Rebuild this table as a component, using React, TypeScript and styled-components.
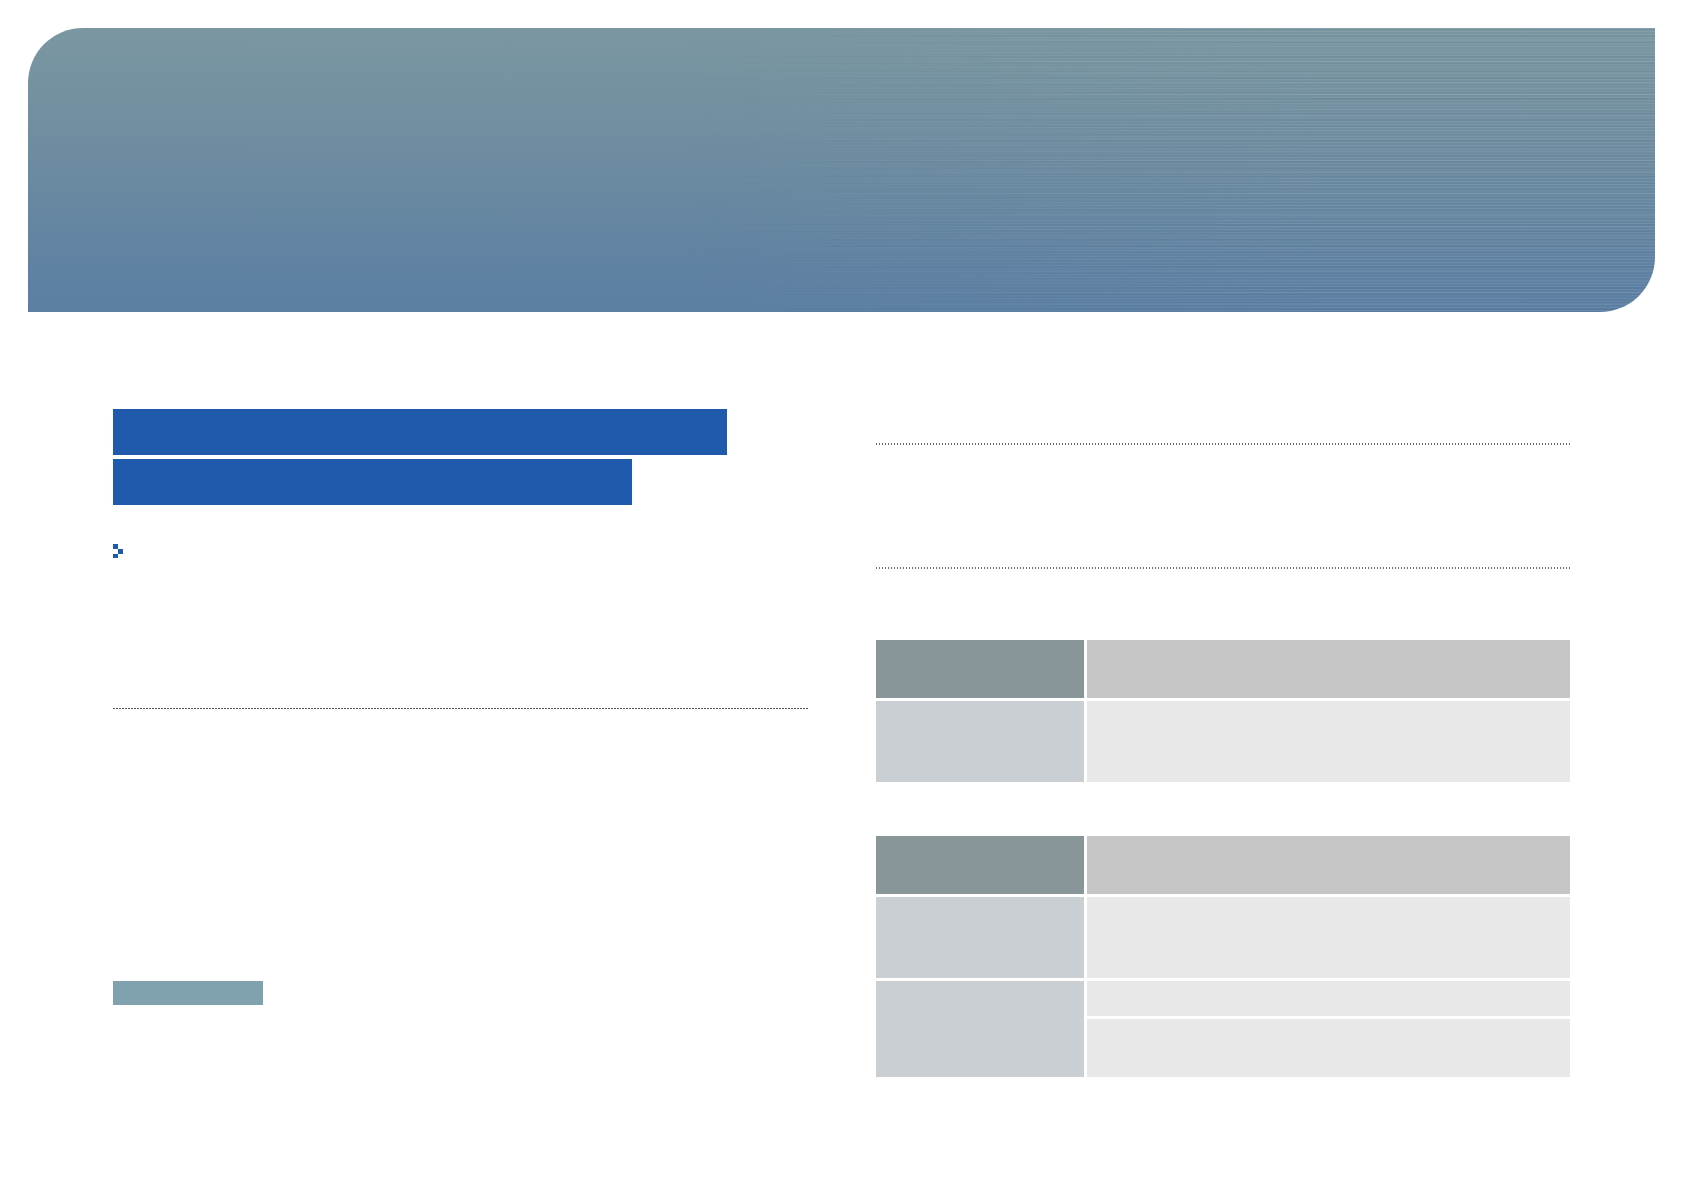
import styled, { createGlobalStyle } from "styled-components";

const GlobalStyle = createGlobalStyle`
  html, body {
    margin: 0;
    padding: 0;
    background: #ffffff;
    font-family: "Liberation Sans", Arial, sans-serif;
  }
`;

export default function App() {
  return (
    <>
      <GlobalStyle />
      <Page>
        <Banner />
        <Content>
          <LeftColumn>
            <TitleBar $width={614} />
            <TitleBar $width={519} $gap={4} />
            <Bullet>
              <svg width="10" height="14" viewBox="0 0 10 14">
                <rect x="0" y="0" width="5" height="5" fill="#1f5aad" />
                <rect x="5" y="5" width="5" height="5" fill="#1f5aad" />
                <rect x="0" y="10" width="5" height="4" fill="#1f5aad" />
              </svg>
            </Bullet>
            <Rule $gap={150} />
            <Tag />
          </LeftColumn>
          <RightColumn>
            <Rule $ticks />
            <Rule $ticks $gap={122} />
            <Table $gap={71}>
              <HeadCell $dark />
              <HeadCell />
              <KeyCell $tall={81} />
              <ValueCell />
            </Table>
            <Table $gap={54}>
              <HeadCell $dark />
              <HeadCell />
              <KeyCell $tall={81} />
              <ValueCell />
              <KeyCell $span={2} />
              <ValueCell $tall={35} />
              <ValueCell $tall={58} />
            </Table>
          </RightColumn>
        </Content>
      </Page>
    </>
  );
}

//style
const Page = styled.div`
  width: 1684px;
  min-height: 1191px;
  padding: 28px 29px 0 28px;
  box-sizing: border-box;
`;

const Banner = styled.div`
  position: relative;
  height: 284px;
  border-radius: 55px 0 55px 0;
  overflow: hidden;
  background: linear-gradient(180deg, #7a97a1 0%, #6d8ca0 45%, #5b7ea3 100%);

  &::after {
    content: "";
    position: absolute;
    inset: 0;
    background:
      repeating-linear-gradient(
        180deg,
        rgba(255, 255, 255, 0.08) 0 1px,
        transparent 1px 3px
      ),
      repeating-linear-gradient(
        180deg,
        rgba(40, 70, 100, 0.06) 0 2px,
        transparent 2px 7px
      ),
      repeating-linear-gradient(
        180deg,
        rgba(255, 255, 255, 0.06) 0 1px,
        transparent 1px 11px
      );
    -webkit-mask-image: linear-gradient(90deg, transparent 40%, #000 80%);
    mask-image: linear-gradient(90deg, transparent 40%, #000 80%);
  }
`;

const Content = styled.div`
  display: grid;
  grid-template-columns: 695px 694px;
  column-gap: 68px;
  padding: 97px 0 0 85px;
  align-items: start;
`;

const LeftColumn = styled.div`
  display: flex;
  flex-direction: column;
  align-items: flex-start;
`;

const RightColumn = styled.div`
  display: flex;
  flex-direction: column;
  padding-top: 34px;
`;

const TitleBar = styled.div<{ $width: number; $gap?: number }>`
  width: ${(p) => p.$width}px;
  height: 46px;
  margin-top: ${(p) => p.$gap ?? 0}px;
  background: #1f5aad;
`;

const Bullet = styled.div`
  display: flex;
  margin-top: 39px;
  height: 14px;

  svg {
    display: block;
  }
`;

const Rule = styled.div<{ $gap?: number; $ticks?: boolean }>`
  align-self: stretch;
  height: ${(p) => (p.$ticks ? 2 : 1)}px;
  margin-top: ${(p) => p.$gap ?? 0}px;
  background: ${(p) =>
    p.$ticks
      ? "repeating-linear-gradient(90deg, #6a6a6a 0 1px, transparent 1px 3px)"
      : "repeating-linear-gradient(90deg, #4e4e4e 0 2px, transparent 2px 3px)"};
`;

const Tag = styled.div`
  width: 150px;
  height: 24px;
  margin-top: 272px;
  background: #7fa2ae;
`;

const Table = styled.div<{ $gap: number }>`
  display: grid;
  grid-template-columns: 208px 483px;
  gap: 3px;
  margin-top: ${(p) => p.$gap}px;
`;

const HeadCell = styled.div<{ $dark?: boolean }>`
  height: 58px;
  background: ${(p) => (p.$dark ? "#88969a" : "#c6c6c6")};
`;

const KeyCell = styled.div<{ $tall?: number; $span?: number }>`
  ${(p) => (p.$tall ? `height: ${p.$tall}px;` : "")}
  ${(p) => (p.$span ? `grid-row: span ${p.$span};` : "")}
  background: #c9cfd2;
`;

const ValueCell = styled.div<{ $tall?: number }>`
  height: ${(p) => p.$tall ?? 81}px;
  background: #e8e8e8;
`;
